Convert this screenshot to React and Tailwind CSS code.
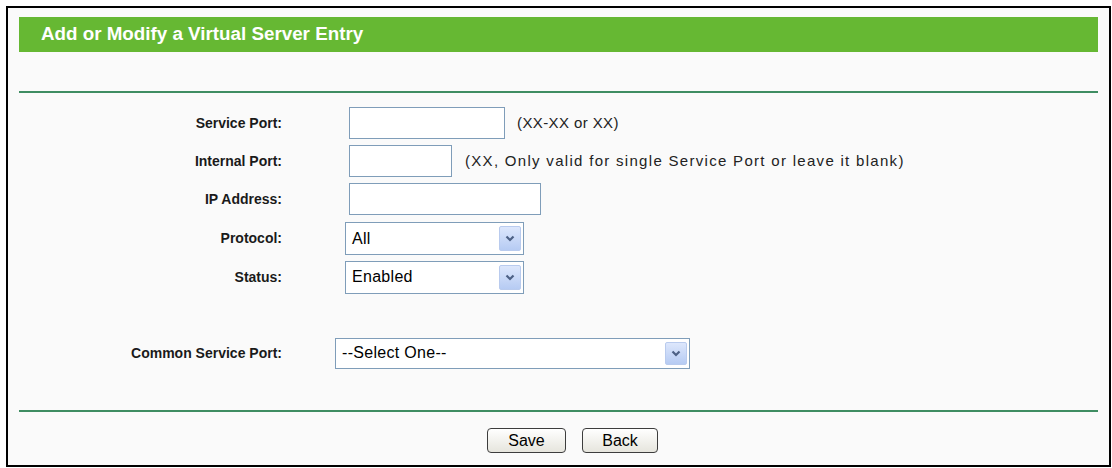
import React from 'react';

const font = "font-['Liberation_Sans',Arial,sans-serif]";

// little XP-style arrow button that sits inside the select boxes
const DropArrow = () => (
  <div className="ml-auto mr-[2px] flex h-[calc(100%-6px)] w-[22px] items-center justify-center rounded-[2px] border border-[#b9cbee] bg-gradient-to-b from-[#dde7fc] to-[#b6cbf3]">
    <svg width="10" height="7" viewBox="0 0 10 7">
      <path d="M1.5 1.5 L5 5 L8.5 1.5" fill="none" stroke="#4d6185" strokeWidth="2.2" />
    </svg>
  </div>
);

const Select = ({ value, width, height }) => (
  <div className={`flex items-center border border-[#7f9db9] bg-white ${width} ${height}`}>
    <span className="pl-[6px] text-[16px] tracking-[0.3px] text-black">{value}</span>
    <DropArrow />
  </div>
);

const Label = ({ children }) => (
  <div className="w-[263px] shrink-0 text-right text-[14px] font-bold text-[#1a1a1a]">{children}</div>
);

const Button = ({ children, width }) => (
  <button className={`h-[25px] ${width} rounded-[4px] border border-[#3d3d3d] bg-gradient-to-b from-white to-[#e6e5dd] text-[16px] text-black`}>
    {children}
  </button>
);

export default function App() {
  return (
    <div className={`h-[468px] w-[1112px] bg-white pl-[6px] pt-[6px] ${font}`}>
      <div className="h-[461px] w-[1105px] border-2 border-black bg-[#fafafa] px-[11px] pt-[9px]">
        {/* title bar */}
        <div className="flex h-[35px] items-center bg-[#66b833] pl-[22px]">
          <h1 className="text-[18.8px] font-bold text-white">Add or Modify a Virtual Server Entry</h1>
        </div>

        <div className="mt-[39px] h-[2px] bg-[#3f8d62]" />

        <div className="mt-[11px] flex flex-col">
          <div className="flex h-[38px] items-center">
            <Label>Service Port:</Label>
            <div className="ml-[67px] h-[32px] w-[156px] border border-[#7f9db9] bg-white" />
            <span className="ml-[12px] text-[15px] tracking-[0.4px] text-[#222]">(XX-XX or XX)</span>
          </div>
          <div className="flex h-[38px] items-center">
            <Label>Internal Port:</Label>
            <div className="ml-[67px] h-[32px] w-[103px] border border-[#7f9db9] bg-white" />
            <span className="ml-[13px] text-[15px] tracking-[1.3px] text-[#222]">
              (XX, Only valid for single Service Port or leave it blank)
            </span>
          </div>
          <div className="flex h-[38px] items-center">
            <Label>IP Address:</Label>
            <div className="ml-[67px] h-[32px] w-[192px] border border-[#7f9db9] bg-white" />
          </div>
          <div className="mt-[1px] flex h-[39px] items-center">
            <Label>Protocol:</Label>
            <div className="ml-[63px]">
              <Select value="All" width="w-[179px]" height="h-[33px]" />
            </div>
          </div>
          <div className="flex h-[38px] items-center">
            <Label>Status:</Label>
            <div className="ml-[63px]">
              <Select value="Enabled" width="w-[179px]" height="h-[33px]" />
            </div>
          </div>
          <div className="mt-[38px] flex h-[38px] items-center">
            <Label>Common Service Port:</Label>
            <div className="ml-[53px]">
              <Select value="--Select One--" width="w-[355px]" height="h-[31px]" />
            </div>
          </div>
        </div>

        <div className="mt-[38px] h-[2px] bg-[#3f8d62]" />

        <div className="mt-[16px] flex justify-center gap-[16px] pl-[28px]">
          <Button width="w-[79px]">Save</Button>
          <Button width="w-[76px]">Back</Button>
        </div>
      </div>
    </div>
  );
}
